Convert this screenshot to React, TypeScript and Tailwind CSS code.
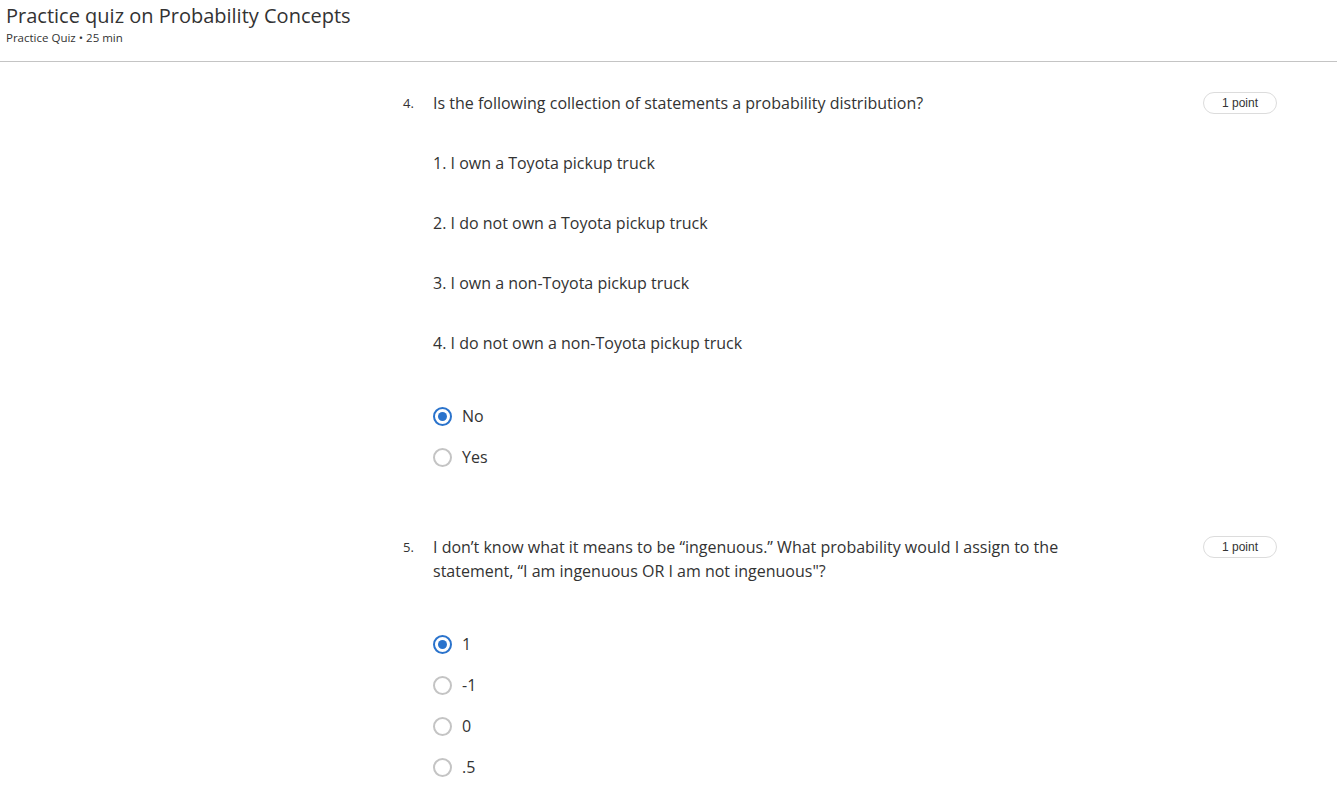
function Radio({ checked }: { checked: boolean }) {
    return checked ? (
        <span className="flex h-[19px] w-[19px] shrink-0 items-center justify-center rounded-full border-2 border-[#2a73cc]">
            <span className="h-[9px] w-[9px] rounded-full bg-[#2a73cc]" />
        </span>
    ) : (
        <span className="h-[19px] w-[19px] shrink-0 rounded-full border-2 border-[#c4c4c4]" />
    );
}

function Options({ items, selected }: { items: string[]; selected: number }) {
    return (
        <div className="mt-[49px] flex flex-col gap-[17px] pl-[30px]">
            {items.map((label, i) => (
                <div key={label} className="flex h-6 items-center gap-[10px]">
                    <Radio checked={i === selected} />
                    <span className="text-[16px] text-[#333]">{label}</span>
                </div>
            ))}
        </div>
    );
}

function Question({ num, children }: { num: string; children: React.ReactNode }) {
    return (
        <div className="flex items-start">
            <span className="w-[30px] shrink-0 text-[13px] leading-6 text-[#333]">
                {num}
            </span>
            <div className="max-w-[640px] text-[16px] leading-6 text-[#333]">
                {children}
            </div>
            <div className="flex-1" />
            <span className="mt-[1px] flex h-[22px] w-[74px] items-center justify-center rounded-full border border-[#dcdcdc] font-['Liberation_Sans',Arial,sans-serif] text-[12px] text-[#333]">
                1 point
            </span>
        </div>
    );
}

export default function App() {
    return (
        <div className="min-h-screen bg-white font-['Open_Sans',sans-serif]">
            {/* Header */}
            <header className="h-[62px] border-b border-[#c4c4c4] pl-[6px] pt-[3px]">
                <h1 className="text-[20px] leading-[26px] text-[#333]">
                    Practice quiz on Probability Concepts
                </h1>
                <p className="mt-[2px] text-[11.5px] leading-[14px] text-[#333]">
                    Practice Quiz • 25 min
                </p>
            </header>

            <main className="pl-[403px] pr-[60px] pt-[29px]">
                {/* Question 4 */}
                <Question num="4.">
                    Is the following collection of statements a probability distribution?
                </Question>
                <div className="mt-[36px] flex flex-col gap-[36px] pl-[30px] text-[16px] leading-6 text-[#333]">
                    <p>1. I own a Toyota pickup truck</p>
                    <p>2. I do not own a Toyota pickup truck</p>
                    <p>3. I own a non-Toyota pickup truck</p>
                    <p>4. I do not own a non-Toyota pickup truck</p>
                </div>
                <Options items={['No', 'Yes']} selected={0} />

                {/* Question 5 */}
                <div className="mt-[66px]">
                    <Question num="5.">
                        I don’t know what it means to be “ingenuous.” What probability would I
                        assign to the statement, “I am ingenuous OR I am not ingenuous"?
                    </Question>
                </div>
                <Options items={['1', '-1', '0', '.5']} selected={0} />
            </main>
        </div>
    );
}
